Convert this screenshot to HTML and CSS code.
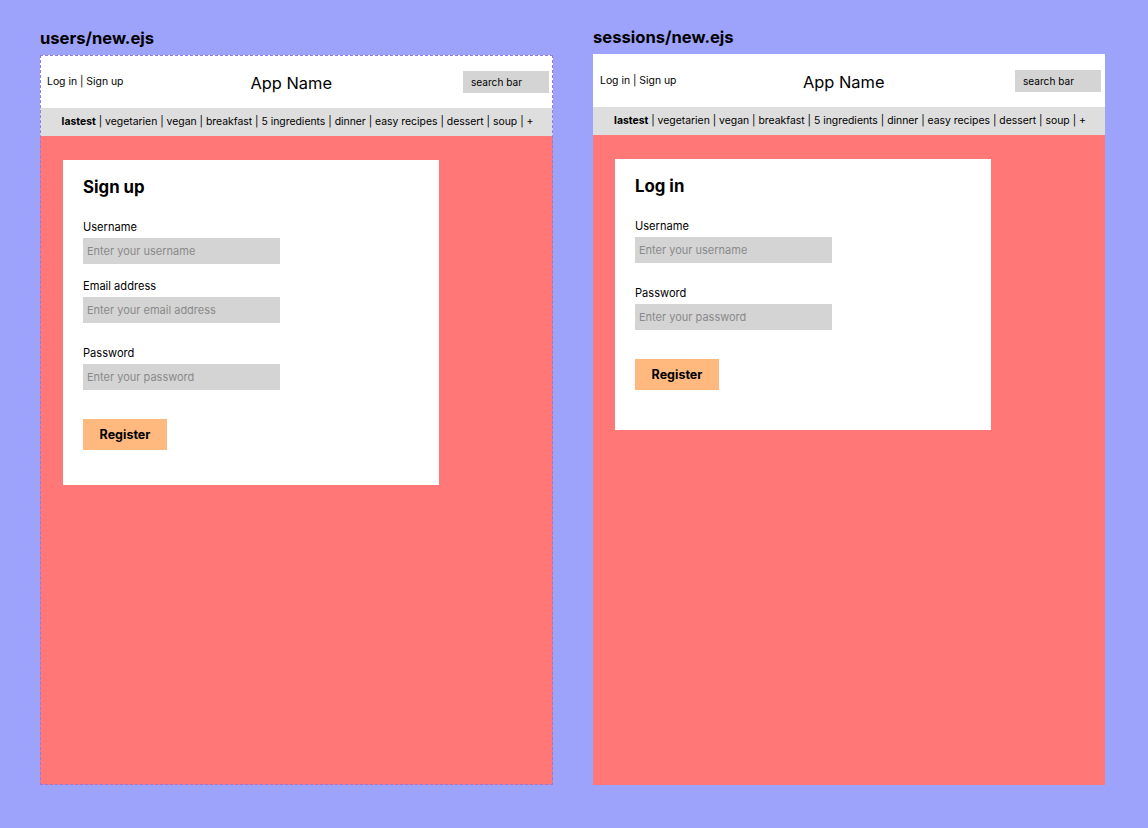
FILE: index.html
```html
<!DOCTYPE html>
<html lang="en">
<head>
<meta charset="utf-8">
<title>Wireframes</title>
<link rel="stylesheet" href="styles.css">
</head>
<body>
<div class="canvas">
  <section class="board">
    <h2 class="board-title">users/new.ejs</h2>
    <div class="frame frame-selected">
      <header class="topbar">
        <div class="auth">Log in | Sign up</div>
        <div class="app-name">App Name</div>
        <div class="search">search bar</div>
      </header>
      <nav class="cats"><b>lastest</b> | vegetarien | vegan | breakfast | 5 ingredients | dinner | easy recipes | dessert | soup | +</nav>
      <main class="content">
        <form class="card card-signup">
          <h1 class="card-title">Sign up</h1>
          <div class="field f-first">
            <label>Username</label>
            <input type="text" placeholder="Enter your username">
          </div>
          <div class="field f-tight">
            <label>Email address</label>
            <input type="text" placeholder="Enter your email address">
          </div>
          <div class="field f-loose">
            <label>Password</label>
            <input type="password" placeholder="Enter your password">
          </div>
          <button type="button" class="btn">Register</button>
        </form>
      </main>
    </div>
  </section>
  <section class="board board-right">
    <h2 class="board-title">sessions/new.ejs</h2>
    <div class="frame">
      <header class="topbar">
        <div class="auth">Log in | Sign up</div>
        <div class="app-name">App Name</div>
        <div class="search">search bar</div>
      </header>
      <nav class="cats"><b>lastest</b> | vegetarien | vegan | breakfast | 5 ingredients | dinner | easy recipes | dessert | soup | +</nav>
      <main class="content">
        <form class="card card-login">
          <h1 class="card-title">Log in</h1>
          <div class="field f-first">
            <label>Username</label>
            <input type="text" placeholder="Enter your username">
          </div>
          <div class="field f-loose">
            <label>Password</label>
            <input type="password" placeholder="Enter your password">
          </div>
          <button type="button" class="btn">Register</button>
        </form>
      </main>
    </div>
  </section>
</div>
</body>
</html>
```

FILE: styles.css
```css
* { box-sizing: border-box; }
html, body { margin: 0; padding: 0; }
body {
  background: #9da2fb;
  font-family: Inter, "Liberation Sans", Arial, sans-serif;
  color: #000;
  width: 1148px;
  height: 828px;
  overflow: hidden;
}
.canvas {
  display: flex;
  gap: 40px;
  padding: 28px 0 0 40px;
}
.board { width: 513px; display: flex; flex-direction: column; }
.board-right { width: 512px; margin-top: -1px; }
.board-title {
  margin: 0 0 7px 0;
  font-size: 16.6px;
  line-height: 20px;
  font-weight: 700;
}
.frame {
  height: 730px;
  background: #ff7777;
  display: flex;
  flex-direction: column;
}
.board-right .frame { height: 731px; }
.frame-selected {
  outline: 1px dashed #8f7be8;
  outline-offset: -1px;
}
.topbar {
  height: 53px;
  background: #fff;
  display: flex;
  align-items: center;
  padding: 0 4px 0 7px;
}
.auth { font-size: 10.4px; line-height: 14px; }
.app-name {
  flex: 1;
  text-align: center;
  font-size: 16.4px;
  line-height: 20px;
  padding-right: 4px;
  margin-top: 2px;
}
.search {
  width: 86px;
  height: 22px;
  background: #d4d4d4;
  font-size: 10.1px;
  line-height: 22px;
  padding-left: 8px;
}
.cats {
  height: 28px;
  background: #dedede;
  font-size: 10.4px;
  line-height: 28px;
  text-align: center;
  padding-left: 2px;
  white-space: nowrap;
}
.cats b { font-weight: 700; }
.content { flex: 1; padding: 24px 0 0 23px; }
.board-right .content { padding: 24px 0 0 22px; }
.card {
  width: 376px;
  background: #fff;
  padding: 17px 20px 0 20px;
  display: flex;
  flex-direction: column;
  align-items: flex-start;
  margin: 0;
}
.card-signup { height: 325px; }
.card-login { height: 271px; }
.card-title {
  margin: 0;
  font-size: 16.8px;
  line-height: 20px;
  font-weight: 700;
}
.field { display: flex; flex-direction: column; }
.field label {
  font-size: 11.1px;
  line-height: 15px;
  height: 15px;
  margin-bottom: 3px;
}
.field input {
  width: 197px;
  height: 26px;
  border: none;
  outline: none;
  background: #d4d4d4;
  padding: 0 0 0 4px;
  margin: 0;
  font-family: Inter, "Liberation Sans", Arial, sans-serif;
  font-size: 11px;
  color: #333;
}
.field input::placeholder { color: #8a8a8a; }
.f-first { margin-top: 23px; }
.f-tight { margin-top: 15px; }
.f-loose { margin-top: 23px; }
.btn {
  margin-top: 29px;
  width: 84px;
  height: 31px;
  border: none;
  background: #ffb97e;
  font-family: Inter, "Liberation Sans", Arial, sans-serif;
  font-weight: 700;
  font-size: 12.5px;
  color: #000;
  padding: 0;
}
```
